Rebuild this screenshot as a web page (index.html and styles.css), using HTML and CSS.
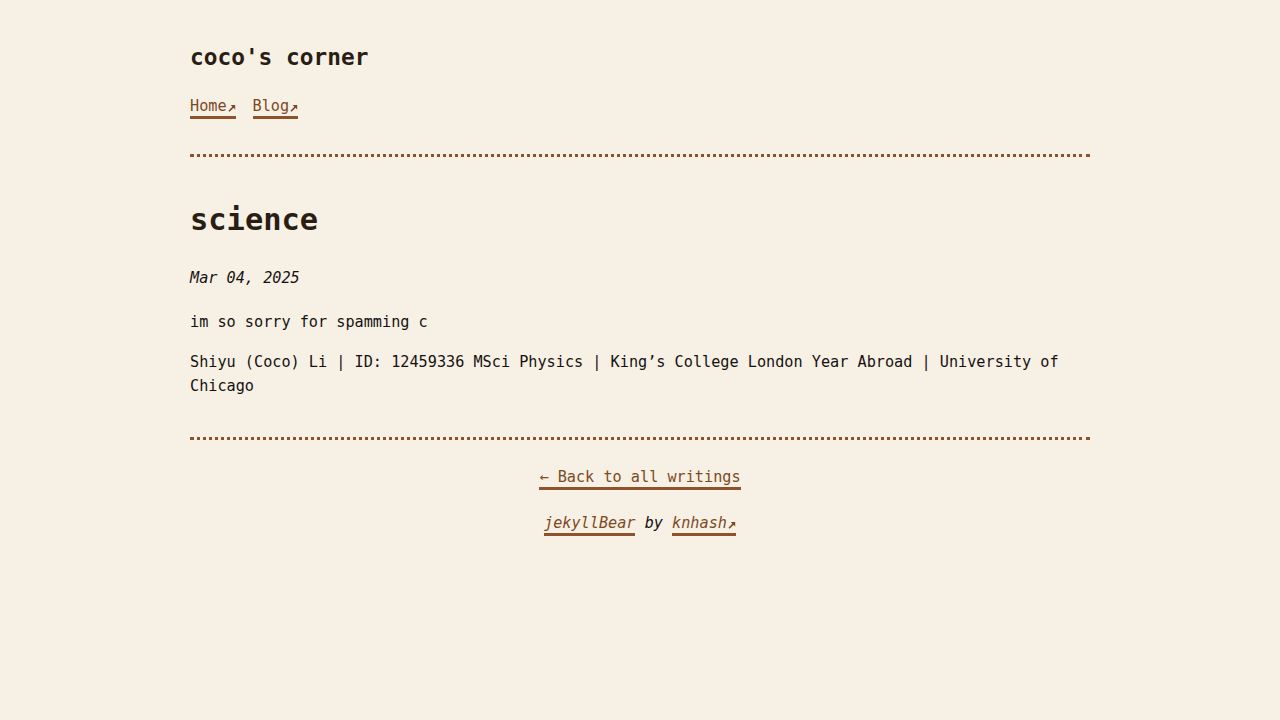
FILE: index.html
```html
<!DOCTYPE html>
<html lang="en">
<head>
<meta charset="utf-8">
<title>science | coco's corner</title>
<link rel="stylesheet" href="styles.css">
</head>
<body>
<div class="page">
  <header class="site-header">
    <div class="site-title">coco's corner</div>
    <nav class="nav">
      <a class="link" href="#">Home<svg class="ext" viewBox="0 0 8 8" width="8" height="8" aria-hidden="true"><path d="M1 7.2 L5.6 2.6" stroke="currentColor" stroke-width="1.6" fill="none"/><path d="M2.6 1 H7.2 V5.6 Z" fill="currentColor"/></svg></a>
      <a class="link" href="#">Blog<svg class="ext" viewBox="0 0 8 8" width="8" height="8" aria-hidden="true"><path d="M1 7.2 L5.6 2.6" stroke="currentColor" stroke-width="1.6" fill="none"/><path d="M2.6 1 H7.2 V5.6 Z" fill="currentColor"/></svg></a>
    </nav>
  </header>
  <div class="rule rule-top"></div>
  <main class="post">
    <h1 class="post-title">science</h1>
    <p class="post-date">Mar 04, 2025</p>
    <p class="post-text first">im so sorry for spamming c</p>
    <p class="post-text">Shiyu (Coco) Li | ID: 12459336 MSci Physics | King’s College London Year Abroad | University of Chicago</p>
  </main>
  <div class="rule rule-bottom"></div>
  <footer class="site-footer">
    <div class="back"><a class="link" href="#">← Back to all writings</a></div>
    <div class="credit"><a class="link" href="#">jekyllBear</a> by <a class="link" href="#">knhash<svg class="ext" viewBox="0 0 8 8" width="8" height="8" aria-hidden="true"><path d="M1 7.2 L5.6 2.6" stroke="currentColor" stroke-width="1.6" fill="none"/><path d="M2.6 1 H7.2 V5.6 Z" fill="currentColor"/></svg></a></div>
  </footer>
</div>
</body>
</html>
```

FILE: styles.css
```css
html, body {
  margin: 0;
  padding: 0;
  background: #f7f0e5;
}

body {
  font-family: "DejaVu Sans Mono", "Liberation Mono", monospace;
  font-size: 15.2px;
  color: #161210;
}

.page {
  width: 900px;
  margin: 0 auto;
}

.site-header {
  padding-top: 42px;
}

.site-title {
  font-size: 22.8px;
  font-weight: bold;
  line-height: 30px;
  color: #2a1e14;
}

.nav {
  display: flex;
  gap: 17px;
  margin-top: 24px;
}

.link {
  display: inline-block;
  line-height: 20px;
  color: #7d4a1f;
  text-decoration: none;
  border-bottom: 3px solid #8e532c;
}

.ext {
  display: inline-block;
  margin-left: 1px;
  vertical-align: -1px;
}

.rule {
  border-top: 3px dotted #8e532c;
}

.rule-top {
  margin-top: 35px;
}

.post {
  padding-top: 45px;
  padding-bottom: 39px;
}

.post-title {
  margin: 0;
  font-size: 30.4px;
  line-height: 36px;
  font-weight: bold;
  color: #2a1e14;
}

.post-date {
  margin: 28px 0 0;
  font-style: italic;
  line-height: 24px;
}

.post-text {
  margin: 16px 0 0;
  line-height: 24px;
}

.post-text.first {
  margin-top: 20px;
}

.site-footer {
  text-align: center;
  padding-top: 27px;
}

.credit {
  margin-top: 23px;
  font-style: italic;
}
```
